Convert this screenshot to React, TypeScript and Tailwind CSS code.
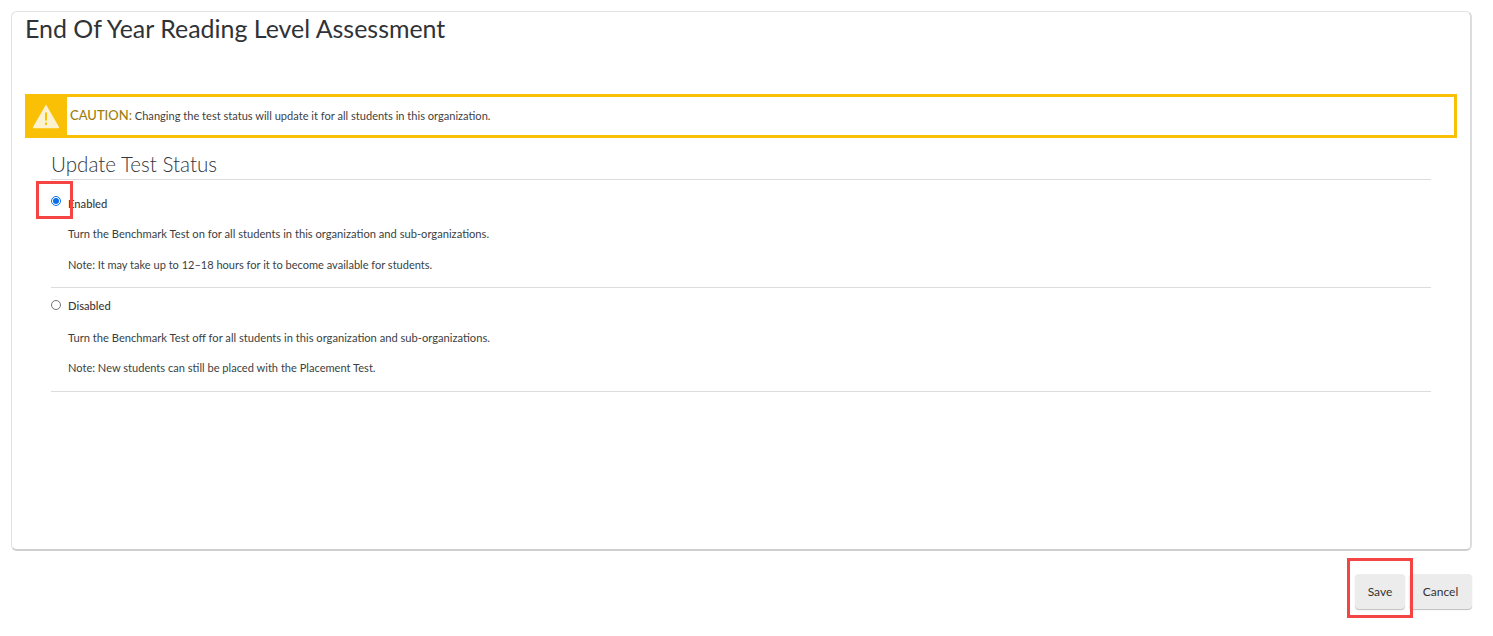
export default function App() {
  return (
    <div className="relative h-[636px] w-[1493px] overflow-hidden bg-white pt-[11px] pl-[11px] font-['Lato','Open_Sans',sans-serif] text-[#3a3f44]">
      <div className="flex h-[540px] w-[1461px] flex-col rounded-[6px] border border-[#e2e2e2] border-r-2 border-b-2 border-r-[#dcdce0] border-b-[#cfcfcf] pl-[13px] pr-[13px]">
        <h1 className="-mt-[1px] h-[83px] text-[24.95px] leading-[34px] font-normal text-[#2f3338]">End Of Year Reading Level Assessment</h1>
        <div className="flex h-[44px] w-[1432px] border-[3px] border-[#f9c006]">
          <div className="-my-[3px] -ml-[3px] flex w-[42px] shrink-0 items-center justify-center bg-[#f9c006]">
            <svg width="28" height="26" viewBox="0 0 28 26">
              <path d="M14 1.5 L27 24 a0.8 0.8 0 0 1 -0.7 1.2 H1.7 a0.8 0.8 0 0 1 -0.7 -1.2 Z" fill="#fdf2d0" />
              <rect x="13" y="9.5" width="2" height="8" fill="#f9c006" />
              <rect x="13" y="19.5" width="2" height="2.5" fill="#f9c006" />
            </svg>
          </div>
          <p className="ml-[3px] -mt-[1px] self-center whitespace-nowrap text-[11.08px] leading-[16px] text-[#3f3f3f]">
            <span className="text-[13px] font-medium text-[#a07d0a]">CAUTION:</span> Changing the test status will update it for all students in this organization.
          </p>
        </div>
        <div className="ml-[26px] mt-[13px] w-[1380px]">
          <h2 className="h-[29px] border-b border-[#dcdcdc] text-[20.6px] leading-[26px] font-light text-[#33383d]">Update Test Status</h2>
          <section className="h-[108px] border-b border-[#dcdcdc]">
            <label className="relative flex h-[46px] items-center pt-[2px]">
              <input type="radio" name="status" defaultChecked className="m-0 h-[10px] w-[10px] -translate-y-[3px] accent-[#0b6fe8]" />
              <span className="ml-[7px] text-[11.2px] font-medium text-[#3a3a3a]">Enabled</span>
            </label>
            <div className="ml-[17px] flex flex-col gap-[15px] text-[11.16px] leading-[16px]">
              <p>Turn the Benchmark Test on for all students in this organization and sub-organizations.</p>
              <p className="text-[11.04px]">Note: It may take up to 12–18 hours for it to become available for students.</p>
            </div>
          </section>
          <section className="h-[104px] border-b border-[#dcdcdc]">
            <label className="flex h-[36px] items-center">
              <input type="radio" name="status" className="m-0 h-[10px] w-[10px] -translate-y-[1px]" />
              <span className="ml-[7px] text-[11.2px] font-medium text-[#3a3a3a]">Disabled</span>
            </label>
            <div className="ml-[17px] flex flex-col gap-[14px] text-[11.16px] leading-[16px]">
              <p className="mt-[6px]">Turn the Benchmark Test off for all students in this organization and sub-organizations.</p>
              <p className="text-[11.08px]">Note: New students can still be placed with the Placement Test.</p>
            </div>
          </section>
        </div>
      </div>
      <div className="mt-[23px] flex w-[1461px] justify-end gap-[4px]">
        <button className="h-[35px] w-[50px] rounded-[4px] bg-[#ececec] text-[12px] font-normal text-[#333] shadow-[0_1px_1px_#bdbdbd]">Save</button>
        <button className="h-[35px] w-[63px] rounded-[4px] bg-[#ececec] text-[12px] font-normal text-[#333] shadow-[0_1px_1px_#bdbdbd]">Cancel</button>
      </div>
      <div className="pointer-events-none absolute left-[36px] top-[181px] h-[38px] w-[37px] border-[3px] border-[#f44444]" />
      <div className="pointer-events-none absolute left-[1347px] top-[558px] h-[60px] w-[66px] border-[3px] border-[#f44444]" />
    </div>
  );
}
